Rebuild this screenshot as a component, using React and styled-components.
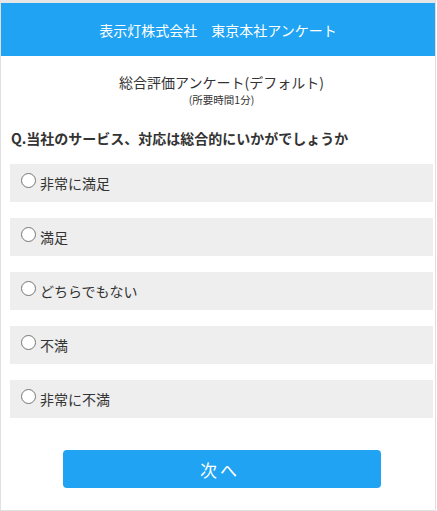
import styled, { createGlobalStyle } from "styled-components";

const GlobalStyle = createGlobalStyle`
  html, body {
    margin: 0;
    padding: 0;
    background: #fff;
  }
  body {
    font-family: "Noto Sans CJK JP", "Noto Sans", sans-serif;
    color: #333;
  }
`;

const Page = styled.div`
  box-sizing: border-box;
  width: 436px;
  height: 511px;
  border: 1px solid #e0e0e0;
  border-top: 3px solid #e6e6e6;
  background: #fff;
`;

const Header = styled.header`
  height: 53px;
  background: #1fa3f2;
  color: #fff;
  display: flex;
  align-items: center;
  justify-content: center;
  font-size: 14px;
`;

const Content = styled.main`
  padding: 16px 2px 0 9px;
`;

const Title = styled.h1`
  margin: 0;
  text-align: center;
  font-size: 14px;
  font-weight: 400;
  line-height: 20px;
`;

const SubTitle = styled.p`
  margin: 0;
  text-align: center;
  font-size: 10.5px;
  line-height: 16px;
`;

const Question = styled.h2`
  margin: 20px 0 16px 1px;
  font-size: 14px;
  font-weight: 700;
  line-height: 20px;
`;

const OptionList = styled.div`
  display: flex;
  flex-direction: column;
  gap: 16px;
`;

const Option = styled.label`
  height: 38px;
  background: #eee;
  display: flex;
  align-items: center;
  padding-left: 10px;
  font-size: 14px;
  cursor: pointer;
`;

const Radio = styled.span`
  box-sizing: border-box;
  width: 15px;
  height: 15px;
  border: 1px solid #767676;
  border-radius: 50%;
  background: #fff;
  margin: 0 4px 6px 1px;
`;

const Footer = styled.div`
  display: flex;
  justify-content: center;
  padding-top: 32px;
`;

const NextButton = styled.button`
  width: 318px;
  height: 38px;
  border: none;
  border-radius: 4px;
  background: #1fa3f2;
  color: #fff;
  font-family: inherit;
  font-size: 17px;
  letter-spacing: 3px;
  padding-left: 3px;
`;

const options = ["非常に満足", "満足", "どちらでもない", "不満", "非常に不満"];

export default function App() {
  return (
    <>
      <GlobalStyle />
      <Page>
        <Header>表示灯株式会社　東京本社アンケート</Header>
        <Content>
          <Title>総合評価アンケート(デフォルト)</Title>
          <SubTitle>(所要時間1分)</SubTitle>
          <Question>Q.当社のサービス、対応は総合的にいかがでしょうか</Question>
          <OptionList>
            {options.map((label) => (
              <Option key={label}>
                <Radio />
                {label}
              </Option>
            ))}
          </OptionList>
          <Footer>
            <NextButton>次へ</NextButton>
          </Footer>
        </Content>
      </Page>
    </>
  );
}
